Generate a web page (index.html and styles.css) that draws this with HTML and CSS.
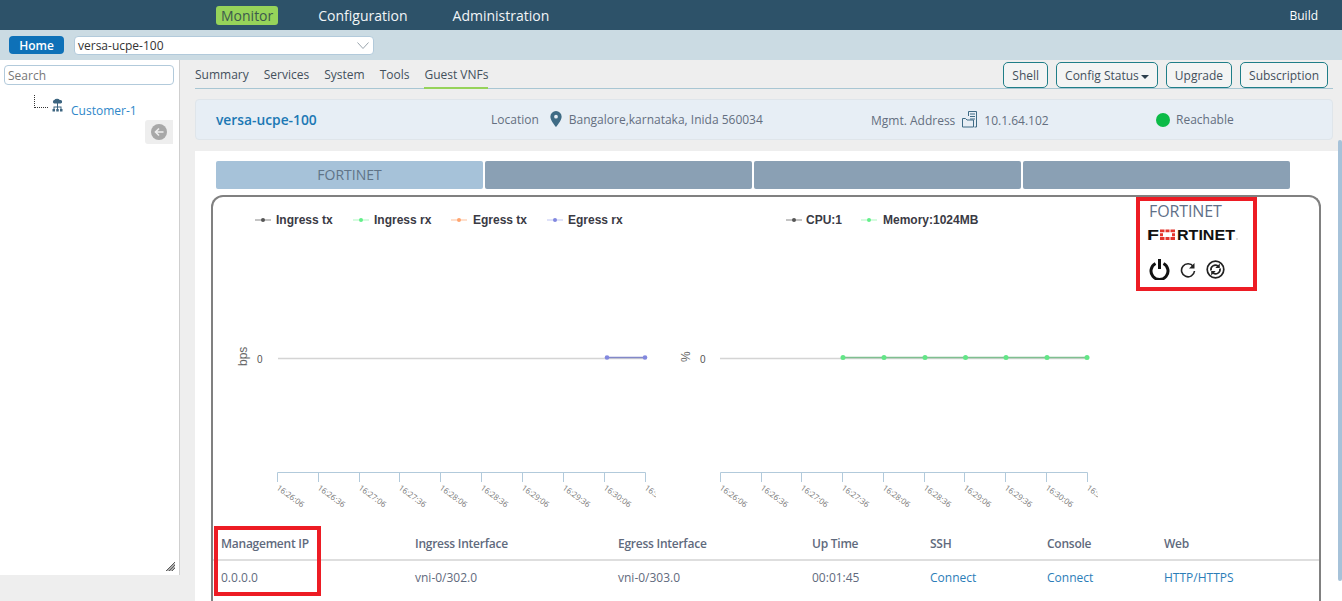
FILE: index.html
```html
<!DOCTYPE html>
<html lang="en">
<head>
<meta charset="utf-8">
<title>Guest VNFs</title>
<link rel="stylesheet" href="styles.css">
</head>
<body>
<header class="topbar">
  <nav class="topnav">
    <a class="topnav-item active">Monitor</a>
    <a class="topnav-item">Configuration</a>
    <a class="topnav-item">Administration</a>
  </nav>
  <span class="build">Build</span>
</header>
<div class="subbar">
  <button class="home">Home</button>
  <div class="device-select">
    <span>versa-ucpe-100</span>
    <svg class="chev" width="12" height="7" viewBox="0 0 12 7"><path d="M.5.5L6 6.500 11.500.5" fill="none" stroke="#9aa5ad" stroke-width="1"/></svg>
  </div>
</div>
<div class="page">
  <aside class="sidebar">
    <input class="search" placeholder="Search">
    <div class="tree">
      <span class="tree-line"></span>
      <svg class="org" width="11" height="15" viewBox="0 0 11 15"><path d="M2 5.500a1.800 1.800 0 0 1 .3-3.400A3 2.200 0 0 1 7.800 2a1.800 1.800 0 0 1 1 3.500z" fill="#3d6580"/><path d="M5 5h1v3.500h3.500V11h-1V9.500h-2.500V11H5V9.500H2.500V11h-1V8.500H5z" fill="#3d6580"/><rect x="0.500" y="11" width="2.500" height="2.500" fill="#3d6580"/><rect x="4.250" y="11" width="2.500" height="2.500" fill="#3d6580"/><rect x="8" y="11" width="2.500" height="2.500" fill="#3d6580"/></svg>
      <a class="tree-label">Customer-1</a>
    </div>
    <div class="collapse-row">
      <span class="collapse">
        <svg width="16" height="16" viewBox="0 0 16 16"><circle cx="8" cy="8" r="8" fill="#a8a8a8"/><path d="M12.500 8H4.500M8 4.500L4.500 8 8 11.500" fill="none" stroke="#eee" stroke-width="1.600"/></svg>
      </span>
    </div>
    <svg class="grip" width="9" height="9" viewBox="0 0 9 9"><path d="M0 9L9 0M3 9l6-6M6 9l3-3M1.500 9L9 1.500M4.500 9L9 4.500" stroke="#333" stroke-width="0.800"/></svg>
  </aside>
  <main class="main">
    <div class="tabsbar">
      <ul class="tabs">
        <li>Summary</li><li>Services</li><li>System</li><li>Tools</li><li class="current">Guest VNFs</li>
      </ul>
      <div class="actions">
        <button class="btn">Shell</button>
        <button class="btn">Config Status<i class="caret"></i></button>
        <button class="btn">Upgrade</button>
        <button class="btn">Subscription</button>
      </div>
    </div>
    <section class="info">
      <h2 class="info-name">versa-ucpe-100</h2>
      <div class="info-loc">
        <span>Location</span>
        <svg class="pin" width="12" height="16" viewBox="0 0 12 17"><path fill-rule="evenodd" d="M6 0a6 6 0 0 1 6 6c0 4-6 11-6 11S0 10 0 6a6 6 0 0 1 6-6zm0 4a2 2 0 1 0 0 4 2 2 0 0 0 0-4z" fill="#3f6b85"/></svg>
        <span>Bangalore,karnataka, Inida 560034</span>
      </div>
      <div class="info-addr">
        <span>Mgmt. Address</span>
        <svg width="15" height="17" viewBox="0 0 15 17"><g fill="none" stroke="#3f6b85"><path d="M6.500 5V.5h8v15.500h-2M8 3h5M8 5.500h5M8 8h5"/><path d="M.5 7.500h3l1.500 1.500h6.500v7H.5z"/></g></svg>
        <span class="addr-val">10.1.64.102</span>
      </div>
      <div class="info-status"><i class="dot"></i><span>Reachable</span></div>
    </section>
    <section class="panel">
      <div class="vnf-tabs">
        <div class="vnf-tab on">FORTINET</div>
        <div class="vnf-tab"></div>
        <div class="vnf-tab"></div>
        <div class="vnf-tab"></div>
      </div>
      <div class="frame">
        <div class="charts">
          <svg class="chart" width="924" height="322" viewBox="214 197 924 322">
            <defs>
              <clipPath id="clip-a"><rect x="270" y="480" width="386" height="40"/></clipPath>
              <clipPath id="clip-b"><rect x="712" y="480" width="386" height="40"/></clipPath>
            </defs>
            <g class="legend">
              <g><path class="lg" d="M255 220h16" stroke="#c4c4c4"/><circle cx="263" cy="220" r="2" fill="#555"/><text x="276" y="224">Ingress tx</text></g>
              <g><path class="lg" d="M353 220h16" stroke="#d5fbdf"/><circle cx="361" cy="220" r="2" fill="#63ef8a"/><text x="374" y="224">Ingress rx</text></g>
              <g><path class="lg" d="M451 220h16" stroke="#ffdfcc"/><circle cx="459" cy="220" r="2" fill="#ffa570"/><text x="473" y="224">Egress tx</text></g>
              <g><path class="lg" d="M547 220h16" stroke="#dfe2f9"/><circle cx="555" cy="220" r="2" fill="#8288df"/><text x="568" y="224">Egress rx</text></g>
              <g><path class="lg" d="M786 220h16" stroke="#c4c4c4"/><circle cx="794" cy="220" r="2" fill="#555"/><text x="806" y="224">CPU:1</text></g>
              <g><path class="lg" d="M861 220h16" stroke="#d5fbdf"/><circle cx="869" cy="220" r="2" fill="#63ef8a"/><text x="883" y="224">Memory:1024MB</text></g>
            </g>
            <text class="ylab" transform="translate(247 366) rotate(-90)">bps</text>
            <text class="y0" x="257" y="363">0</text>
            <path d="M278 358.500h367" stroke="#d4d4d4" stroke-width="1.500"/>
            <path d="M607 357.500h38" stroke="#8288c8" stroke-width="1.500"/>
            <circle cx="607" cy="357.500" r="2.300" fill="#8288df"/><circle cx="645" cy="357.500" r="2.300" fill="#8288df"/>
            <text class="ylab" transform="translate(690 362) rotate(-90)">%</text>
            <text class="y0" x="700" y="363">0</text>
            <path d="M720 358.500h367" stroke="#d4d4d4" stroke-width="1.500"/>
            <path d="M843 357.500h244" stroke="#7fbf90" stroke-width="1.500"/>
            <g fill="#63e687"><circle cx="843" cy="357.500" r="2.500"/><circle cx="884" cy="357.500" r="2.500"/><circle cx="925" cy="357.500" r="2.500"/><circle cx="965.500" cy="357.500" r="2.500"/><circle cx="1006" cy="357.500" r="2.500"/><circle cx="1047" cy="357.500" r="2.500"/><circle cx="1087" cy="357.500" r="2.500"/></g>
            <g class="axis" fill="none" stroke="#b2cadb">
              <path d="M277.500 482v-9.500h368V482M318.500 472.500V482M359.500 472.500V482M399.500 472.500V482M440.500 472.500V482M481.500 472.500V482M522.500 472.500V482M563.500 472.500V482M604.500 472.500V482"/>
              <path d="M720.500 482v-9.500h367V482M761.500 472.500V482M801.500 472.500V482M842.500 472.500V482M883.500 472.500V482M924.500 472.500V482M964.500 472.500V482M1005.500 472.500V482M1046.500 472.500V482"/>
            </g>
            <g class="ticks">
              <text transform="translate(276 489) rotate(36)">16:26:06</text>
              <text transform="translate(317 489) rotate(36)">16:26:36</text>
              <text transform="translate(358 489) rotate(36)">16:27:06</text>
              <text transform="translate(398 489) rotate(36)">16:27:36</text>
              <text transform="translate(439 489) rotate(36)">16:28:06</text>
              <text transform="translate(480 489) rotate(36)">16:28:36</text>
              <text transform="translate(521 489) rotate(36)">16:29:06</text>
              <text transform="translate(562 489) rotate(36)">16:29:36</text>
              <text transform="translate(603 489) rotate(36)">16:30:06</text>
              <g clip-path="url(#clip-a)"><text transform="translate(644 489) rotate(36)">16:30:36</text></g>
              <text transform="translate(719 489) rotate(36)">16:26:06</text>
              <text transform="translate(760 489) rotate(36)">16:26:36</text>
              <text transform="translate(800 489) rotate(36)">16:27:06</text>
              <text transform="translate(841 489) rotate(36)">16:27:36</text>
              <text transform="translate(882 489) rotate(36)">16:28:06</text>
              <text transform="translate(923 489) rotate(36)">16:28:36</text>
              <text transform="translate(963 489) rotate(36)">16:29:06</text>
              <text transform="translate(1004 489) rotate(36)">16:29:36</text>
              <text transform="translate(1045 489) rotate(36)">16:30:06</text>
              <g clip-path="url(#clip-b)"><text transform="translate(1086 489) rotate(36)">16:30:36</text></g>
            </g>
          </svg>
          <div class="vendor">
            <div class="vendor-name">FORTINET</div>
            <svg class="vendor-logo" width="94" height="18" viewBox="0 0 94 18">
              <text class="logo-text" x="0" y="14" textLength="12" lengthAdjust="spacingAndGlyphs">F</text>
              <path fill="#e3342c" d="M13 3.500h4.500v2.800H13zM18.500 3.500h4v2.800h-4zM23.500 3.500H28v2.800h-4.500zM13 7.200h3v3h-3zM25 7.200h3v3h-3zM13 11.100h4.500V14H13zM18.500 11.100h4V14h-4zM23.500 11.100H28V14h-4.500z"/>
              <text class="logo-text" x="30" y="14" textLength="58" lengthAdjust="spacingAndGlyphs">RTINET</text>
              <circle cx="90" cy="13" r="0.700" fill="#999"/>
            </svg>
            <div class="vendor-icons">
              <svg width="21" height="21" viewBox="0 0 21 21"><path d="M6.500 4.500a8.500 8.500 0 1 0 8 0M10.500 0v10" fill="none" stroke="#111" stroke-width="3"/></svg>
              <svg width="16" height="16" viewBox="0 0 16 16"><path d="M13.300 4.500A6.500 6.500 0 1 0 14.500 9" fill="none" stroke="#222" stroke-width="1.600"/><path d="M14.500 1v5.500H9z" fill="#222"/></svg>
              <svg width="19" height="19" viewBox="0 0 19 19"><circle cx="9.500" cy="9.500" r="8.300" fill="none" stroke="#222" stroke-width="1.700"/><path d="M5 10.500a4.500 4.500 0 0 1 7-4.500M14 8.500a4.500 4.500 0 0 1-7 4.500" fill="none" stroke="#222" stroke-width="1.700"/><path d="M13.800 3.500v4.500h-4.500zM5.200 15.500v-4.500h4.500z" fill="#222"/></svg>
            </div>
          </div>
        </div>
        <table class="vnf-table">
          <thead>
            <tr><th>Management IP</th><th>Ingress Interface</th><th>Egress Interface</th><th>Up Time</th><th>SSH</th><th>Console</th><th>Web</th></tr>
          </thead>
          <tbody>
            <tr><td>0.0.0.0</td><td>vni-0/302.0</td><td>vni-0/303.0</td><td>00:01:45</td><td><a>Connect</a></td><td><a>Connect</a></td><td><a>HTTP/HTTPS</a></td></tr>
          </tbody>
        </table>
      </div>
    </section>
  </main>
  <div class="scroll-thumb"></div>
</div>
<div class="mark mark-vendor"></div>
<div class="mark mark-ip"></div>
</body>
</html>
```
FILE: styles.css
```css
* { box-sizing: border-box; }
html, body { margin: 0; height: 601px; overflow: hidden; }
body { font-family: "Open Sans", sans-serif; font-size: 12px; color: #5f6a7d; background: #eee; position: relative; }

.topbar { height: 30px; background: #2d5269; display: flex; align-items: center; justify-content: space-between; padding: 0 24px 0 216px; }
.topnav { display: flex; gap: 35px; align-items: center; }
.topnav-item { font-size: 14px; color: #f1f5f7; line-height: 19px; padding: 0 5px; }
.topnav-item.active { background: #96d35a; color: #3c5a4c; border-radius: 3px; }
.build { color: #fff; font-size: 12px; font-weight: 400; }

.subbar { height: 30px; background: #cbdbe3; display: flex; align-items: center; padding: 0 0 0 9px; gap: 10px; }
.home { width: 55px; height: 18px; border: 0; border-radius: 4px; background: #0e71b8; color: #fff; font: 600 12px "Open Sans", sans-serif; padding: 0; }
.device-select { width: 300px; height: 19px; background: #fff; border: 1px solid #b2cadb; border-radius: 4px; display: flex; align-items: center; justify-content: space-between; padding: 0 4px 0 3px; color: #333; font-size: 12px; }

.page { display: flex; height: 541px; position: relative; }
.sidebar { width: 180px; height: 515px; background: #fff; border-right: 1px solid #cfcfcf; padding: 5px 6px 0 4px; position: relative; flex: none; }
.search { display: block; width: 170px; height: 20px; border: 1px solid #b2cadb; border-radius: 4px; padding: 0 3px; font: 12px "Open Sans", sans-serif; color: #333; outline: 0; }
.search::placeholder { color: #777; opacity: 1; }
.tree { display: flex; align-items: flex-start; padding: 10px 0 0 30px; height: 35px; }
.tree-line { width: 14px; height: 13px; border-left: 1px dotted #333; border-bottom: 1px dotted #333; }
.org { margin: 3px 0 0 4px; }
.tree-label { color: #2e87c9; font-size: 12px; margin: 8px 0 0 8px; line-height: 16px; }
.collapse-row { display: flex; justify-content: flex-end; }
.collapse { width: 28px; height: 24px; background: #eee; border-radius: 3px 0 0 3px; display: flex; align-items: center; justify-content: center; }
.grip { position: absolute; right: 4px; bottom: 4px; }

.main { width: 1162px; padding: 0 0 0 15px; flex: none; }
.tabsbar { height: 29px; width: 1138px; border-bottom: 1px solid #a8c6d3; display: flex; justify-content: space-between; margin-bottom: 10px; padding-right: 5px; }
.tabs { display: flex; list-style: none; margin: 0; padding: 0; gap: 15px; height: 29px; }
.tabs li { font-size: 12px; color: #43505c; line-height: 29px; height: 29px; }
.tabs .current { border-bottom: 2px solid #96d35a; }
.actions { display: flex; gap: 8px; padding-top: 2px; }
.btn { height: 26px; padding: 0 8px; background: #f3f4f4; border: 1px solid #1f7e88; border-radius: 5px; font: 12px "Open Sans", sans-serif; color: #43505c; }
.caret { display: inline-block; border: 4px solid transparent; border-top-color: #2c3e4c; border-bottom: 0; margin: 0 0 0 2px; vertical-align: 1px; }

.info { width: 1138px; height: 41px; background: #e7eef5; border: 1px solid #dfe5ea; border-radius: 4px; display: flex; align-items: center; margin-bottom: 11px; }
.info-name { margin: 0; font-size: 13.8px; font-weight: 600; color: #1c78b4; width: 295px; padding-left: 20px; }
.info-loc, .info-addr, .info-status { display: flex; align-items: center; color: #646e80; font-size: 12px; }
.info-loc { width: 380px; gap: 7px; }
.pin { margin-left: 4px; margin-top: -1px; }
.info-addr { width: 285px; gap: 7px; padding-top: 1px; }
.info-addr svg { margin-top: -2px; }
.info-status { gap: 6px; }
.dot { width: 14px; height: 14px; border-radius: 50%; background: #0cbb47; }

.panel { width: 1147px; height: 460px; background: #fff; padding: 10px 0 0 17px; }
.vnf-tabs { display: flex; gap: 2px; padding-left: 4px; margin-bottom: 6px; }
.vnf-tab { width: 267px; height: 28px; background: #8aa0b4; border-radius: 2px; text-align: center; line-height: 28px; color: #5f7387; font-size: 14px; }
.vnf-tab.on { background: #a6c2d9; }
.frame { width: 1110px; height: 420px; border: 2px solid #808080; border-bottom: 0; border-radius: 12px 12px 0 0; margin-left: -1px; }
.charts { display: flex; height: 322px; }
.chart { display: block; flex: none; margin-left: 1px; margin-right: -1px; }
.chart text { font-family: "Liberation Sans", sans-serif; }
.legend text { font-size: 12px; font-weight: 700; fill: #3a3a44; }
.lg { stroke-width: 2; }
.ylab { font-size: 12px; fill: #666; }
.y0 { font-size: 10px; fill: #555; }
.chart .ticks text { font-family: "Open Sans", sans-serif; font-size: 8px; fill: #777; }
.vendor { padding: 4px 0 0 12px; }
.vendor-name { font-size: 16px; letter-spacing: -0.1px; color: #5f7088; line-height: 20px; }
.vendor-logo { display: block; margin: 5px 0 0 -2px; }
.logo-text { font: 700 15px "Liberation Sans", sans-serif; fill: #111; }
.vendor-icons { display: flex; align-items: center; gap: 10px; margin-top: 15px; }

.vnf-table { border-collapse: collapse; table-layout: fixed; width: 1106px; }
.vnf-table th, .vnf-table td { font-size: 12px; font-weight: 400; text-align: left; padding: 0 0 0 8px; color: #5f6a7d; }
.vnf-table th { height: 41px; border-bottom: 2px solid #dedede; font-weight: 600; letter-spacing: -0.25px; padding-top: 9px; }
.vnf-table td { height: 34px; }
.vnf-table th:nth-child(1) { width: 194px; }
.vnf-table th:nth-child(2) { width: 203px; }
.vnf-table th:nth-child(3) { width: 194px; }
.vnf-table th:nth-child(4) { width: 118px; }
.vnf-table th:nth-child(5) { width: 117px; }
.vnf-table th:nth-child(6) { width: 117px; }
.vnf-table a { color: #2b7db8; }

.scroll-thumb { position: absolute; right: 0; top: 80px; width: 4px; height: 441px; background: #a6c2d9; border-radius: 3px; }
.mark { position: absolute; border: 4px solid #ed1c24; }
.mark-vendor { left: 1136px; top: 197px; width: 121px; height: 94px; }
.mark-ip { left: 214px; top: 526px; width: 107px; height: 70px; }
```
